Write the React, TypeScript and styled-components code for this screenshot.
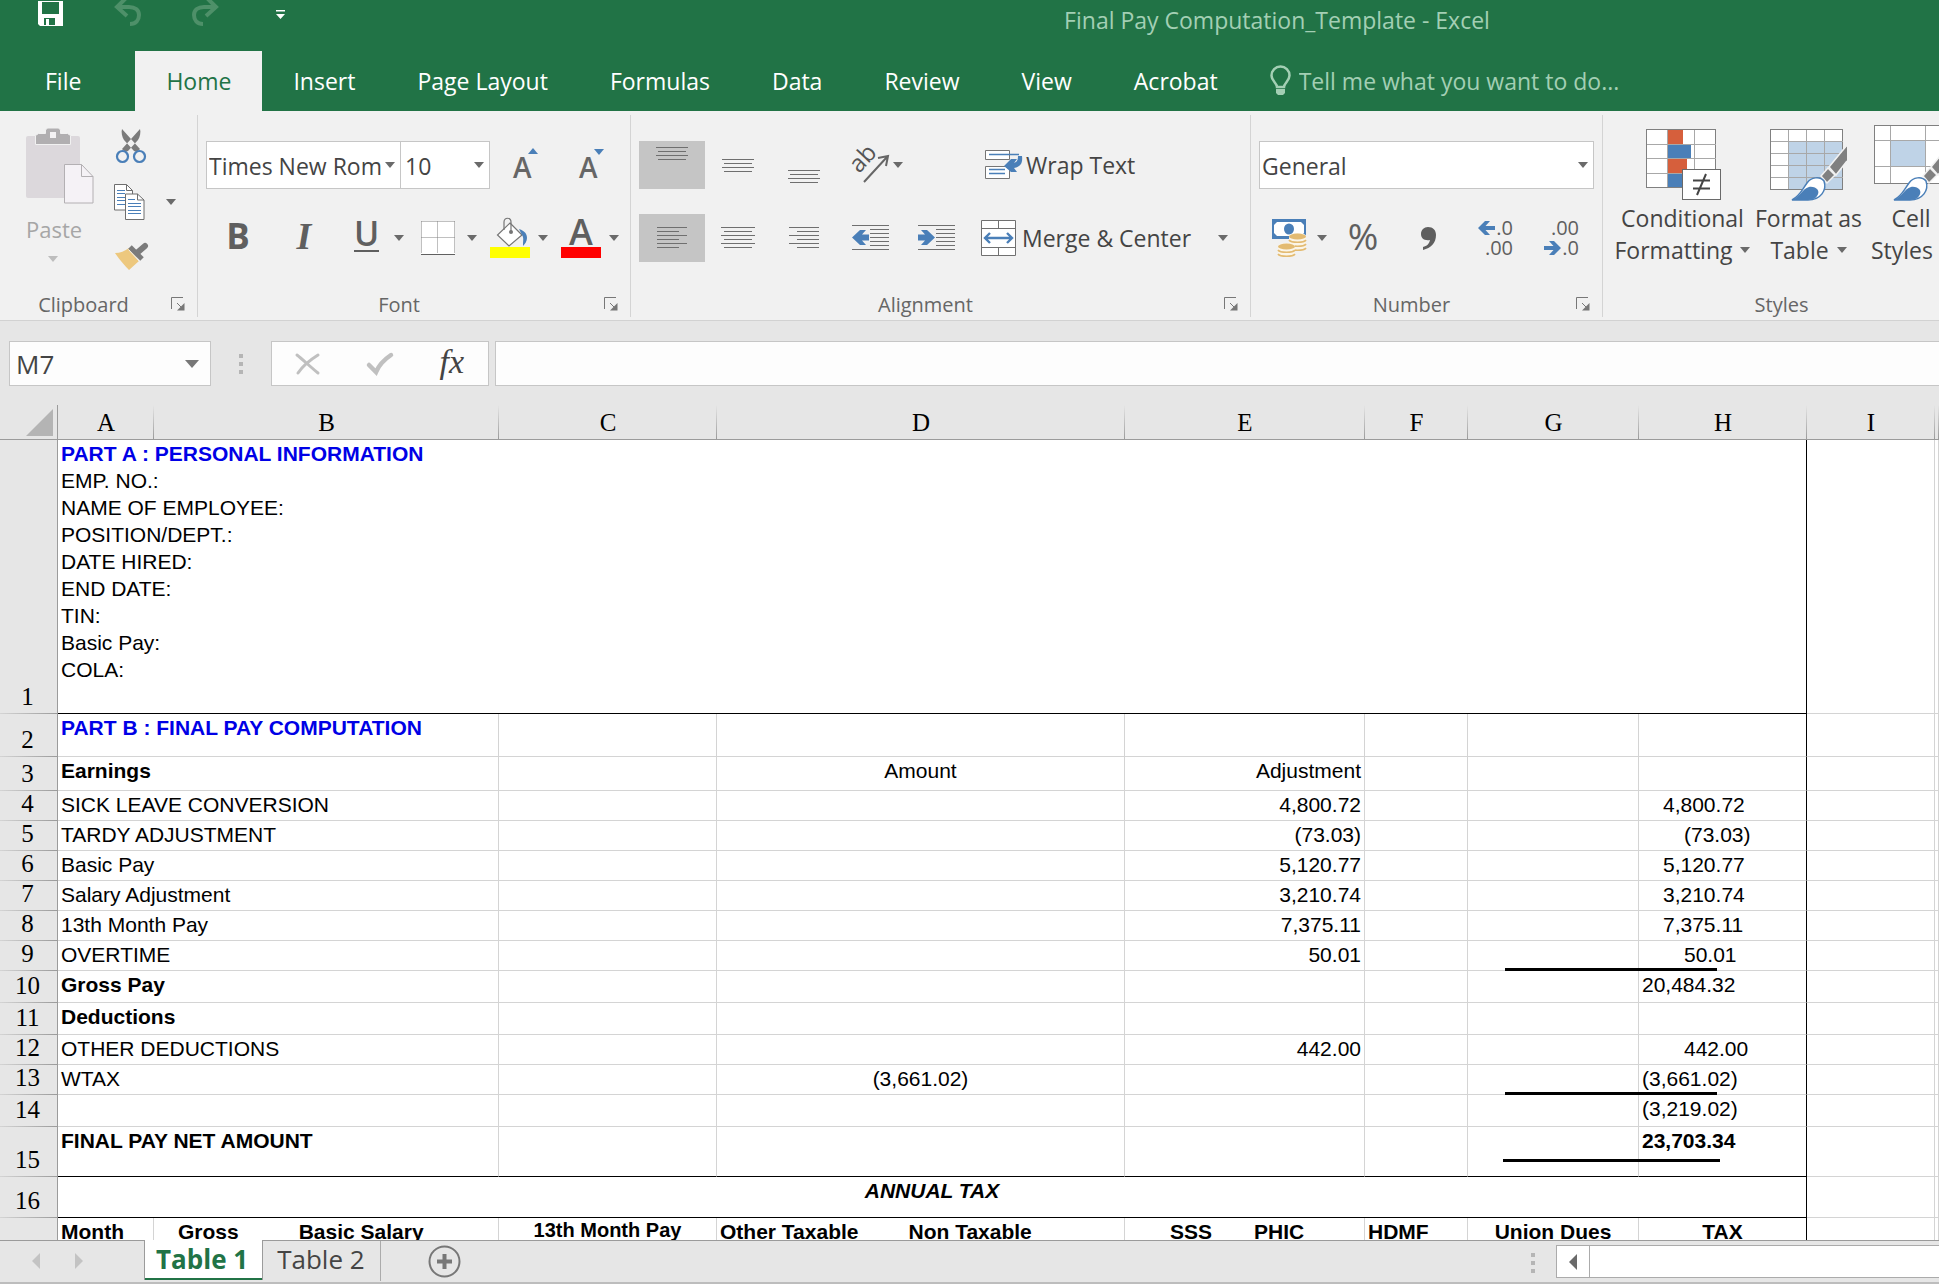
import React from 'react';
import styled, { createGlobalStyle, css } from 'styled-components';

const UI_FONT = '"Open Sans", "Noto Sans", sans-serif';
const CELL_FONT = '"Liberation Sans", Arial, sans-serif';
const HEAD_FONT = '"Liberation Serif", "Times New Roman", serif';

const GREEN = '#217346';
const BLUE = '#4a7fb8';
const GRAY = '#808080';
const GRID = '#d4d4d4';
const EDGE = '#9b9b9b';

const GlobalStyle = createGlobalStyle`
  *, *::before, *::after { box-sizing: border-box; }
  body { margin: 0; font-family: ${UI_FONT}; background: #e6e6e6; }
  button, input, select { font: inherit; color: inherit; margin: 0; }
  svg { display: block; flex: none; overflow: visible; }
`;

const Window = styled.div`
  display: flex;
  flex-direction: column;
  height: 100vh;
  overflow: hidden;
  background: #e6e6e6;
  color: #444;
  font-size: 23px;
`;

const BareButton = styled.button`
  display: inline-flex;
  align-items: center;
  justify-content: center;
  border: 0;
  padding: 0;
  background: none;
  cursor: pointer;
`;

/* ---------- title bar and tabs ---------- */

const TitleBar = styled.header`
  display: flex;
  height: 51px;
  background: ${GREEN};
  color: #a3cfb4;
`;

const QuickAccess = styled.div`
  display: flex;
  flex: 0 0 615px;
  align-items: flex-start;
  gap: 51px;
  padding-left: 38px;
`;

const Title = styled.h1`
  flex: 1;
  margin: 0;
  padding-top: 4px;
  font-size: 23px;
  font-weight: 400;
  line-height: 32px;
  text-align: center;
`;

const TabBar = styled.nav`
  display: flex;
  height: 60px;
  background: ${GREEN};
`;

const Tab = styled.button<{ $active?: boolean; $file?: boolean }>`
  border: 0;
  padding: 0 31px;
  background: ${(p) => (p.$active ? '#f1f1f1' : 'transparent')};
  color: ${(p) => (p.$active ? GREEN : '#fff')};
  line-height: 60px;
  white-space: nowrap;
  ${(p) => p.$file && css`padding: 0 54px 0 45px;`}
`;

const TellMe = styled.label`
  display: flex;
  flex: 1;
  align-items: center;
  gap: 8px;
  padding-left: 21px;
  color: #a3cfb4;
`;

const TellMeInput = styled.input`
  flex: 1;
  min-width: 0;
  border: 0;
  padding: 0;
  background: none;
  outline: none;
  &::placeholder { color: #a3cfb4; opacity: 1; }
`;

/* ---------- ribbon ---------- */

const Ribbon = styled.section`
  display: flex;
  flex: none;
  height: 210px;
  padding-top: 4px;
  overflow: hidden;
  background: #f1f1f1;
  border-bottom: 1px solid #d2d2d2;
`;

const Group = styled.div<{ $width: number }>`
  display: flex;
  flex: none;
  flex-direction: column;
  width: ${(p) => p.$width}px;
  height: 202px;
  border-right: 1px solid #d4d4d4;
`;

const GroupBody = styled.div`
  display: flex;
  flex: 1;
  flex-direction: column;
  gap: 25px;
  padding: 26px 8px 0;
`;

const GroupFoot = styled.div`
  display: flex;
  align-items: center;
  height: 26px;
  padding-right: 12px;
  color: #666;
  font-size: 20px;
`;

const GroupName = styled.span`
  flex: 1;
  text-align: center;
`;

const Launcher = styled(BareButton)`
  width: 18px;
  justify-content: flex-end;
`;

const ToolRow = styled.div`
  display: flex;
  align-items: center;
  height: 48px;
`;

const ToolButton = styled(BareButton)<{ $width?: number; $on?: boolean; $gap?: number; $start?: number }>`
  flex: none;
  width: ${(p) => p.$width ?? 66}px;
  height: 48px;
  gap: ${(p) => p.$gap ?? 10}px;
  background: ${(p) => (p.$on ? '#c5c5c5' : 'none')};
  color: #5f5f5f;
  ${(p) => p.$start && css`justify-content: flex-start; padding-left: ${p.$start}px;`}
`;

const LabelButton = styled(BareButton)`
  height: 48px;
  gap: 5px;
  white-space: nowrap;
`;

const SelectBox = styled.span<{ $width?: number; $joined?: boolean }>`
  display: flex;
  align-items: center;
  width: ${(p) => (p.$width ? `${p.$width}px` : '100%')};
  height: 48px;
  padding: 0 5px 0 2px;
  background: #fff;
  border: 1px solid #c6c6c6;
  ${(p) => p.$joined && css`margin-left: -1px; padding: 0 5px 0 4px;`}
`;

const Select = styled.select`
  flex: 1;
  min-width: 0;
  height: 46px;
  appearance: none;
  border: 0;
  padding: 2px 0 0;
  background: none;
  outline: none;
`;

const Glyph = styled.span<{ $size: number; $weight?: number; $serif?: boolean; $underline?: boolean }>`
  font-family: ${(p) => (p.$serif ? HEAD_FONT : UI_FONT)};
  font-size: ${(p) => p.$size}px;
  font-style: ${(p) => (p.$serif ? 'italic' : 'normal')};
  font-weight: ${(p) => p.$weight ?? 600};
  line-height: 36px;
  height: 40px;
  ${(p) =>
    p.$underline &&
    css`
      height: 34px;
      margin-bottom: 6px;
      border-bottom: 2px solid #5f5f5f;
      line-height: 30px;
    `}
`;

const ColorStack = styled.span`
  display: flex;
  flex-direction: column;
  align-items: center;
  width: 40px;
  height: 40px;
  border-bottom: 11px solid #f00;
  font-size: 36px;
  font-weight: 600;
  line-height: 28px;
`;

const ClipboardBody = styled.div`
  display: flex;
  flex: 1;
  padding: 4px 0 0 26px;
`;

const PasteButton = styled(BareButton)`
  flex-direction: column;
  align-items: flex-start;
  justify-content: flex-start;
  width: 78px;
  padding-top: 9px;
  color: #a6a6a6;
  font-size: 22px;
  line-height: 50px;
`;

const PasteCaret = styled.span`
  padding: 2px 0 0 22px;
`;

const ClipTools = styled.div`
  display: flex;
  flex-direction: column;
`;

const ClipTool = styled(BareButton)`
  justify-content: flex-start;
  gap: 21px;
  width: 82px;
  height: 55px;
  padding-left: 10px;
`;

const Decimals = styled.span`
  display: grid;
  justify-items: end;
  width: 36px;
  font-size: 20px;
  line-height: 20px;
`;

const DecimalLine = styled.span`
  display: flex;
  align-items: center;
  gap: 1px;
`;

const StylesBody = styled.div`
  display: flex;
  flex: 1;
  padding: 10px 0 0 4px;
`;

const BigButton = styled(BareButton)<{ $width: number }>`
  flex: none;
  flex-direction: column;
  justify-content: flex-start;
  width: ${(p) => p.$width}px;
  line-height: 32px;
  white-space: nowrap;
`;

const BigIcon = styled.span`
  display: flex;
  align-items: flex-end;
  height: 75px;
  margin-bottom: 2px;
`;

const BigLine = styled.span`
  display: flex;
  align-items: center;
  gap: 8px;
`;

/* ---------- formula bar ---------- */

const FormulaBar = styled.div`
  display: flex;
  flex: none;
  height: 84px;
  padding: 20px 0 19px 9px;
`;

const NameBox = styled.div`
  display: flex;
  align-items: center;
  width: 202px;
  padding: 0 11px 0 6px;
  background: #fdfdfd;
  border: 1px solid #c6c6c6;
`;

const PlainInput = styled.input`
  flex: 1;
  min-width: 0;
  width: 100%;
  height: 42px;
  border: 0;
  padding: 0;
  background: none;
  font-size: 26px;
  outline: none;
`;

const Dots = styled.span<{ $width: number }>`
  display: flex;
  flex-direction: column;
  align-items: center;
  justify-content: center;
  gap: 4px;
  width: ${(p) => p.$width}px;
`;

const Dot = styled.i`
  width: 4px;
  height: 4px;
  background: #b5b5b5;
`;

const EntryTools = styled.div`
  display: flex;
  align-items: center;
  justify-content: space-between;
  width: 218px;
  padding: 0 24px;
  background: #fdfdfd;
  border: 1px solid #c6c6c6;
`;

const FormulaField = styled.div`
  flex: 1;
  margin-left: 6px;
  padding: 0 8px;
  background: #fdfdfd;
  border: 1px solid #c6c6c6;
  border-right: 0;
`;

/* ---------- worksheet ---------- */

const SheetArea = styled.main`
  flex: 1;
  min-height: 0;
  overflow: hidden;
  background: #fff;
`;

const Grid = styled.table`
  width: 100%;
  table-layout: fixed;
  border-collapse: separate;
  border-spacing: 0;
  font-family: ${CELL_FONT};
  font-size: 21px;
  line-height: 27px;
  color: #000;
`;

const headText = css`
  padding: 0 0 3px;
  font-family: ${HEAD_FONT};
  font-size: 25px;
  font-weight: 400;
  line-height: 26px;
  text-align: center;
  vertical-align: bottom;
`;

const ColHead = styled.th`
  ${headText}
  height: 35px;
  border-bottom: 1px solid ${EDGE};
  background: linear-gradient(#e6e6e6, ${EDGE}) right / 1px 100% no-repeat #e6e6e6;
`;

const RowHead = styled.th`
  ${headText}
  padding: 0 2px 4px 0;
  border-right: 1px solid ${EDGE};
  background: linear-gradient(90deg, #d4d4d4, ${EDGE}) bottom / 100% 1px no-repeat #e6e6e6;
`;

const Corner = styled.td`
  padding: 0 4px 3px 0;
  border-bottom: 1px solid ${EDGE};
  border-right: 1px solid ${EDGE};
  background: #e6e6e6;
  vertical-align: bottom;
  & > svg { margin-left: auto; }
`;

const Row = styled.tr<{ $height: number }>`
  height: ${(p) => p.$height}px;
`;

type CellProps = {
  $align?: string;
  $bold?: boolean;
  $italic?: boolean;
  $small?: boolean;
  $heading?: boolean;
  $rule?: boolean;
  $edge?: boolean;
  $indent?: number;
};

const Cell = styled.td<CellProps>`
  position: relative;
  padding: 0 3px 0 ${(p) => 3 + (p.$indent ?? 0) * 21}px;
  border-right: 1px solid ${(p) => (p.$edge ? '#000' : GRID)};
  border-bottom: 1px solid ${(p) => (p.$rule ? '#000' : GRID)};
  color: ${(p) => (p.$heading ? '#0000e6' : '#000')};
  font-weight: ${(p) => (p.$bold || p.$heading ? 700 : 400)};
  font-style: ${(p) => (p.$italic ? 'italic' : 'normal')};
  text-align: ${(p) => p.$align ?? 'left'};
  vertical-align: top;
  white-space: nowrap;
  ${(p) => p.$small && css`font-size: 20px; line-height: 25px;`}
`;

const InfoLine = styled.div<{ $heading?: boolean }>`
  color: ${(p) => (p.$heading ? '#0000e6' : '#000')};
  font-weight: ${(p) => (p.$heading ? 700 : 400)};
`;

const TotalLine = styled.span<{ $raised?: boolean }>`
  position: absolute;
  z-index: 1;
  left: ${(p) => (p.$raised ? 35 : 37)}px;
  bottom: ${(p) => (p.$raised ? 14 : -1)}px;
  width: ${(p) => (p.$raised ? 217 : 212)}px;
  height: 3px;
  background: #000;
`;

const Pair = styled.span<{ $gap: number }>`
  display: flex;
  gap: ${(p) => p.$gap}px;
`;

/* ---------- sheet tabs ---------- */

const SheetBar = styled.footer`
  display: flex;
  flex: none;
  height: 44px;
  border-top: 1px solid ${EDGE};
  background: linear-gradient(#bdbdbd, #bdbdbd) bottom / 100% 2px no-repeat #e6e6e6;
`;

const SheetArrows = styled.div`
  display: flex;
  align-items: center;
  gap: 35px;
  width: 144px;
  height: 40px;
  padding-left: 32px;
`;

const SheetTab = styled.button<{ $active?: boolean }>`
  height: 40px;
  border: 0;
  padding: 0 15px 4px 14px;
  background: none;
  font-size: 26px;
  line-height: 34px;
  white-space: nowrap;
  ${(p) =>
    p.$active
      ? css`
          margin-top: -1px;
          padding: 0 14px 3px 11px;
          background: #fff;
          color: ${GREEN};
          font-weight: 700;
          border: solid ${EDGE};
          border-width: 0 1px;
          box-shadow: inset 0 -2px 0 ${GREEN};
        `
      : css`border-right: 1px solid #ababab;`}
`;

const AddSheet = styled(BareButton)`
  width: 128px;
  height: 40px;
`;

const Spacer = styled.span`
  flex: 1;
`;

const ScrollTrack = styled.div`
  display: flex;
  width: 383px;
  height: 33px;
  margin: 4px 0 0 11px;
  background: #fff;
  border: 1px solid #ababab;
  border-right: 0;
`;

const ScrollButton = styled(BareButton)`
  width: 33px;
  border-right: 1px solid #ababab;
`;

/* ---------- drawings ---------- */

const Caret = ({ color = '#6a6a6a', w = 10, h = 6 }: { color?: string; w?: number; h?: number }) => (
  <svg width={w} height={h} aria-hidden="true">
    <path d={`M0 0H${w}L${w / 2} ${h}Z`} fill={color} />
  </svg>
);

const SaveIcon = () => (
  <svg width="25" height="26" viewBox="0 0 25 26">
    <path fillRule="evenodd" fill="#fff" d="M0 1h25v25H2l-2-2zM4 2v12h17V2zM6 18v7h2v-6h3v6h6v-7z" />
  </svg>
);

const UndoIcon = ({ flip }: { flip?: boolean }) => (
  <svg width="27" height="26" viewBox="0 0 27 26">
    <g transform={flip ? 'matrix(-1 0 0 1 27 0)' : undefined} fill="none" stroke="#4e9069" strokeWidth="4">
      <path d="M13-3 3 7l10 9" />
      <path d="M3 7h12c6 0 10 3 10 8s-3 9-9 9" />
    </g>
  </svg>
);

const QuickMenuIcon = () => (
  <svg width="15" height="20" viewBox="-6 0 15 20">
    <path d="M0 10h9v1.500H0zM0 14h9l-4.500 5z" fill="#fff" />
  </svg>
);

const BulbIcon = () => (
  <svg width="21" height="30" viewBox="0 0 21 30">
    <path d="M7 21c0-4-5.500-6-5.500-11.500a9 9 0 0 1 18 0C19.500 15 14 17 14 21z" fill="none" stroke="#a3cfb4" strokeWidth="2.500" />
    <path d="M6 23h9v4l-2 2H8l-2-2z" fill="#a3cfb4" />
  </svg>
);

const PasteIcon = () => (
  <svg width="68" height="76" viewBox="0 0 68 76">
    <rect y="8" width="54" height="62" rx="2" fill="#dcd8dc" />
    <path d="M9.500 16.500v-9l3-2h7V2l2-2h11l2 2v3.500h7l3 2v9z" fill="#b1afb1" stroke="#f1f1f1" />
    <rect x="24" y="4" width="6" height="6" fill="#f4f2f4" />
    <path d="M38.500 36.500h17l11.500 12v26.500h-28.500z" fill="#f5f2f6" stroke="#b3b0b3" />
    <path d="M55.500 36.500v12H67" fill="none" stroke="#b3b0b3" />
  </svg>
);

const CutIcon = () => (
  <svg width="33" height="35" viewBox="-2 0 33 35">
    <path d="M6 0 24 20l-3 3-3-1L8 11C6 8 5 3 6 0zM24 0 6 20l3 3 3-1 10-11c2-3 3-8 2-11z" fill="#7b7b7b" />
    <g fill="#f1f1f1" stroke={BLUE} strokeWidth="2.200">
      <ellipse cx="6.500" cy="27.500" rx="5.500" ry="5.500" />
      <ellipse cx="23.500" cy="27.500" rx="5.500" ry="5.500" />
    </g>
  </svg>
);

const CopyIcon = () => (
  <svg width="31" height="36" viewBox="0 0 31 36">
    <path d="M.5.500h12l6 6V26H.500z" fill="#fff" stroke="#6e6e6e" />
    <path d="M12.500.500v6h6" fill="none" stroke="#6e6e6e" />
    <path d="M3 6.500h8M3 9.500h8M3 13.500h8M3 16.500h8M3 20.500h8" stroke={BLUE} />
    <path d="M11.500 10h12l6.500 6v19.500H11.500z" fill="#fff" stroke="#6e6e6e" />
    <path d="M23.500 10v6H30" fill="none" stroke="#6e6e6e" />
    <path d="M14 15.500h7M14 19.500h13M14 22.500h13M14 26.500h13M14 29.500h13" stroke={BLUE} />
  </svg>
);

const BrushIcon = () => (
  <svg width="34" height="28" viewBox="-1 0 34 28">
    <path d="M0 10c5 0 10-2 14-5l10 13-10 9C9 22 4 16 0 10z" fill="#edc87e" />
    <path d="m15 4 12 12" stroke="#7b7b7b" strokeWidth="5" />
    <path d="m23 9 7-6" stroke="#7b7b7b" strokeWidth="6" strokeLinecap="round" />
    <path d="m13.500 6.500 11 12" stroke="#f1f1f1" />
  </svg>
);

const BorderIcon = () => (
  <svg width="34" height="34" viewBox="0 0 34 34">
    <rect width="34" height="33" fill="#fff" />
    <path d="M.5.500h33M.5 16.500h33M.5.500v32M16.500.500v32M33.500.500v32" stroke="#808080" strokeDasharray="1 1" fill="none" />
    <path d="M0 33.500h34" stroke="#606060" />
  </svg>
);

const FillIcon = () => (
  <svg width="40" height="40" viewBox="0 0 40 40">
    <path d="M20 5 32 17 19 28 7.500 17z" fill="#fff" stroke="#757575" strokeWidth="1.200" />
    <path d="M14 12V4c0-5 7-5 7 0v9" fill="none" stroke="#757575" strokeWidth="1.200" />
    <circle cx="21" cy="14" r="2" fill="#757575" />
    <path d="M29 11c6 2 8 5 8 9 0 3-2 6-4 8 0-6 1-8-1-11z" fill={BLUE} />
    <rect y="29" width="40" height="11" fill="#ff0" />
  </svg>
);

const GrowIcon = ({ down }: { down?: boolean }) => (
  <svg width="26" height="34" viewBox="0 0 26 34">
    <text x="0" y="30" fontSize="28" fontWeight="600" fontFamily='"Open Sans", sans-serif' fill="#666">A</text>
    <path d={down ? 'M15 1h10l-5 6z' : 'M15 6h10l-5-6z'} fill={BLUE} />
  </svg>
);

const lineSpec: Record<string, { top: number; long: number; short: number; count: number; side: string }> = {
  top: { top: 6, long: 32, short: 28, count: 4, side: 'center' },
  middle: { top: 18, long: 32, short: 28, count: 4, side: 'center' },
  bottom: { top: 29, long: 32, short: 28, count: 4, side: 'center' },
  left: { top: 13, long: 30, short: 22, count: 6, side: 'left' },
  center: { top: 13, long: 34, short: 28, count: 6, side: 'center' },
  right: { top: 13, long: 30, short: 22, count: 6, side: 'right' },
};

const AlignIcon = ({ kind }: { kind: string }) => {
  const s = lineSpec[kind];
  return (
    <svg width="34" height="48" viewBox="0 0 34 48">
      {Array.from({ length: s.count }, (_, i) => {
        const w = i % 2 ? s.short : s.long;
        const x = s.side === 'left' ? 2 : s.side === 'right' ? 32 - w : (34 - w) / 2;
        return <rect key={i} x={x} y={s.top + i * 4} width={w} height="1" fill="#6f6f6f" />;
      })}
    </svg>
  );
};

const OrientIcon = () => (
  <svg width="38" height="36" viewBox="0 0 38 36">
    <text transform="translate(8 27) rotate(-47)" fontSize="24" fontFamily='"Open Sans", sans-serif' fill="#555">ab</text>
    <path d="M13 35 36 10M27 11l10-2-2 10" fill="none" stroke="#666" strokeWidth="2" />
  </svg>
);

const WrapIcon = () => (
  <svg width="36" height="30" viewBox="0 0 36 30">
    <path d="M.5.500h24v9H.500zM.5 16.500h24v12H.500z" fill="#fff" stroke="#757575" />
    <path d="M4 4.500h30M4 19.500h16M4 23.500h16" stroke={BLUE} strokeWidth="1.500" />
    <path d="M33 6h4c1 8-2 11-8 12l3 4h-6l-7-6 7-7h6l-3 4c3-1 4-3 4-7z" fill={BLUE} />
  </svg>
);

const MergeIcon = () => (
  <svg width="36" height="37" viewBox="0 0 36 37">
    <path d="M.5.500h34v35H.500z" fill="#fff" stroke="#707070" />
    <path d="M.5 8.500h34M.5 27.500h34M17.500.500v8M17.500 27.500v8" stroke="#707070" />
    <path d="M4 18h27M9 13l-5 5 5 5M26 13l5 5-5 5" fill="none" stroke={BLUE} strokeWidth="2.400" />
  </svg>
);

const IndentIcon = ({ right }: { right?: boolean }) => (
  <svg width="37" height="26" viewBox="0 0 37 26">
    <path d="M0 .5h37M18 4.500h19M18 8.500h19M18 12.500h19M18 16.500h19M18 20.500h19M0 24.500h37" stroke="#6f6f6f" />
    {right ? (
      <path d="M0 9.500h7L3 5h6l8 7.500L9 20H3l4-4.500H0z" fill={BLUE} />
    ) : (
      <path d="M17 9.500h-7L14 5H8l-8 7.500L8 20h6l-4-4.500h7z" fill={BLUE} />
    )}
  </svg>
);

const MoneyIcon = () => (
  <svg width="35" height="38" viewBox="0 0 35 38">
    <path d="M0 0h34v20H0z" fill={BLUE} />
    <path d="M5 3h24l3 3v8l-3 3H5l-3-3V6z" fill="#fff" />
    <ellipse cx="17" cy="10" rx="5" ry="5.500" fill={BLUE} />
    <path d="M17 17c0-4 17-4 17 0v12c0 3-17 3-17 0z" fill="#fbf5e8" />
    <ellipse cx="25.500" cy="17.500" rx="8.500" ry="3" fill="#e3bb72" />
    <path d="M17 21c2 3 15 3 17 0M17 25c2 3 15 3 17 0M17 29c2 3 15 3 17 0" fill="none" stroke="#e3bb72" strokeWidth="1.600" />
    <path d="M6 27c0-4 17-4 17 0v9c0 3-17 3-17 0z" fill="#fbf5e8" />
    <ellipse cx="14.500" cy="27.500" rx="8.500" ry="3" fill="#e3bb72" />
    <path d="M6 31c2 3 15 3 17 0M6 35c2 3 15 3 17 0" fill="none" stroke="#e3bb72" strokeWidth="1.600" />
  </svg>
);

const CommaIcon = () => (
  <svg width="15" height="23" viewBox="0 0 15 23">
    <path d="M7 0c5 0 8 3 8 8 0 8-5 13-13 15v-3c4-1 6-3 7-7C3 14 0 11 0 7c0-4 3-7 7-7z" fill="#5f5f5f" />
  </svg>
);

const SmallArrow = ({ right }: { right?: boolean }) => (
  <svg width="17" height="14" viewBox="0 0 17 14">
    <path
      d={right ? 'M17 7 10 0H5l4.500 5H0v4h9.500L5 14h5z' : 'M0 7l7-7h5L7.500 5H17v4H7.500l4.500 5H7z'}
      fill={BLUE}
    />
  </svg>
);

const LauncherIcon = () => (
  <svg width="14" height="14" viewBox="0 0 14 14">
    <path d="M.5 12V.500H12M6 6l5 5" fill="none" stroke="#777" />
    <path d="M13.500 6v7.500H6z" fill="#777" />
  </svg>
);

const PaintTip = () => (
  <>
    <path d="M77 17 59 38l7 8 11-14z" fill={GRAY} />
    <path d="M77 16 59 38l7 8 11-14" fill="none" stroke="#f1f1f1" strokeWidth="1.500" />
    <path d="m58 39-7 8 6 7 8-8z" fill={GRAY} stroke="#f1f1f1" strokeWidth="1.500" />
    <path
      d="M22 71c8-4 10-10 15-17 4-6 13-7 17-2 3 9-3 19-16 19z"
      fill="#fff"
      stroke={BLUE}
      strokeWidth="1.500"
    />
    <path d="M22 71c9-4 10-11 17-13 7-1 12 4 8 9-2 3-5 4-11 4z" fill={BLUE} />
  </>
);

const ConditionalIcon = () => (
  <svg width="74" height="71" viewBox="0 0 74 71">
    <rect x=".5" y=".5" width="69" height="58" fill="#fff" stroke={GRAY} />
    <path d="M21.500 1v57M48.500 1v57M1 15.500h69M1 29.500h69M1 44.500h69" stroke="#a8a8a8" />
    <path d="M22 1h15v14H22zM22 30h19v14H22z" fill="#d65f3c" />
    <path d="M22 16h23v13H22zM22 45h14v13H22z" fill={BLUE} />
    <rect x="36.500" y="40.500" width="38" height="30" fill="#fff" stroke="#6a6a6a" />
    <path d="M47 51.500h17M47 59.500h17M60 45 51 66" stroke="#444" strokeWidth="2" />
  </svg>
);

const TableFormatIcon = () => (
  <svg width="77" height="71" viewBox="0 0 77 71">
    <rect x=".5" y=".5" width="72" height="60" fill="#fff" stroke={GRAY} />
    <path d="M19 13h53v47H19z" fill="#bfd3e7" />
    <path d="M18.500 1v59M36.500 1v59M54.500 1v59M1 12.500h72M1 24.500h72M1 36.500h72M1 48.500h72" stroke="#a8a8a8" />
    <PaintTip />
  </svg>
);

const CellStylesIcon = () => (
  <svg width="74" height="75" viewBox="0 0 74 75">
    <rect x=".5" y=".5" width="70" height="58" fill="#fff" stroke={GRAY} />
    <path d="M17 15h35v26H17z" fill="#bfd3e7" />
    <path d="M16.500 1v57M51.500 1v57M1 15.500h70M1 41.500h70" stroke="#a8a8a8" />
    <g transform="translate(-2 4)">
      <PaintTip />
    </g>
  </svg>
);

const CancelIcon = () => (
  <svg width="24" height="22" viewBox="0 0 24 22">
    <path d="M1 2c4 3 17 15 21 18M22 2C14 7 6 14 2 20" fill="none" stroke="#c0c0c0" strokeWidth="3" strokeLinecap="round" />
  </svg>
);

const EnterIcon = () => (
  <svg width="26" height="22" viewBox="0 0 26 22">
    <path d="M2 12l7 7C12 12 18 6 24 2" fill="none" stroke="#c0c0c0" strokeWidth="4.500" strokeLinecap="round" />
  </svg>
);

const PlusIcon = () => (
  <svg width="33" height="33" viewBox="0 0 33 33">
    <circle cx="16.500" cy="16.500" r="15" fill="none" stroke="#777" strokeWidth="2" />
    <path d="M16.500 9v15M9 16.500h15" stroke="#777" strokeWidth="4" />
  </svg>
);

const SideArrow = ({ right, color = '#c3c3c3' }: { right?: boolean; color?: string }) => (
  <svg width="8" height="16" viewBox="0 0 8 16">
    <path d={right ? 'M0 0v16l8-8z' : 'M8 0v16L0 8z'} fill={color} />
  </svg>
);

const CornerIcon = () => (
  <svg width="27" height="27" viewBox="0 0 27 27">
    <path d="M27 0v27H0z" fill="#b4b4b4" />
  </svg>
);

/* ---------- parts ---------- */

const Foot = ({ name, launcher = true }: { name: string; launcher?: boolean }) => (
  <GroupFoot>
    <GroupName>{name}</GroupName>
    {launcher && (
      <Launcher aria-label={`${name} settings`}>
        <LauncherIcon />
      </Launcher>
    )}
  </GroupFoot>
);

const ThreeDots = ({ width }: { width: number }) => (
  <Dots $width={width}>
    <Dot />
    <Dot />
    <Dot />
  </Dots>
);

const tabs = ['Insert', 'Page Layout', 'Formulas', 'Data', 'Review', 'View', 'Acrobat'];
const columns = [96, 345, 218, 408, 240, 103, 171, 168, 128];
const letters = 'ABCDEFGHI'.split('');
const info = ['EMP. NO.:', 'NAME OF EMPLOYEE:', 'POSITION/DEPT.:', 'DATE HIRED:', 'END DATE:', 'TIN:', 'Basic Pay:', 'COLA:'];

type Line = {
  n: number;
  height: number;
  label?: string;
  bold?: boolean;
  heading?: boolean;
  d?: string;
  e?: string;
  h?: string;
  indent?: number;
  hBold?: boolean;
  total?: 'low' | 'raised';
  rule?: boolean;
};

const lines: Line[] = [
  { n: 2, height: 43, label: 'PART B : FINAL PAY COMPUTATION', heading: true },
  { n: 3, height: 34, label: 'Earnings', bold: true, d: 'Amount', e: 'Adjustment' },
  { n: 4, height: 30, label: 'SICK LEAVE CONVERSION', e: '4,800.72', h: '4,800.72', indent: 1 },
  { n: 5, height: 30, label: 'TARDY ADJUSTMENT', e: '(73.03)', h: '(73.03)', indent: 2 },
  { n: 6, height: 30, label: 'Basic Pay', e: '5,120.77', h: '5,120.77', indent: 1 },
  { n: 7, height: 30, label: 'Salary Adjustment', e: '3,210.74', h: '3,210.74', indent: 1 },
  { n: 8, height: 30, label: '13th Month Pay', e: '7,375.11', h: '7,375.11', indent: 1 },
  { n: 9, height: 30, label: 'OVERTIME', e: '50.01', h: '50.01', indent: 2, total: 'low' },
  { n: 10, height: 32, label: 'Gross Pay', bold: true, h: '20,484.32' },
  { n: 11, height: 32, label: 'Deductions', bold: true },
  { n: 12, height: 30, label: 'OTHER DEDUCTIONS', e: '442.00', h: '442.00', indent: 2 },
  { n: 13, height: 30, label: 'WTAX', d: '(3,661.02)', h: '(3,661.02)', total: 'low' },
  { n: 14, height: 32, h: '(3,219.02)' },
  { n: 15, height: 50, label: 'FINAL PAY NET AMOUNT', bold: true, h: '23,703.34', hBold: true, total: 'raised', rule: true },
];

const Worksheet = () => (
  <Grid>
    <colgroup>
      <col width={58} />
      {columns.map((w, i) => (
        <col key={i} width={w} />
      ))}
      <col />
    </colgroup>
    <thead>
      <tr>
        <Corner>
          <CornerIcon />
        </Corner>
        {letters.map((l) => (
          <ColHead key={l} scope="col">{l}</ColHead>
        ))}
        <ColHead />
      </tr>
    </thead>
    <tbody>
      <Row $height={274}>
        <RowHead scope="row">1</RowHead>
        <Cell colSpan={8} $rule $edge>
          <InfoLine $heading>PART A : PERSONAL INFORMATION</InfoLine>
          {info.map((t) => (
            <InfoLine key={t}>{t}</InfoLine>
          ))}
        </Cell>
        <Cell />
        <Cell />
      </Row>
      {lines.map((r) => (
        <Row key={r.n} $height={r.height}>
          <RowHead scope="row">{r.n}</RowHead>
          <Cell colSpan={2} $bold={r.bold} $heading={r.heading} $rule={r.rule}>{r.label}</Cell>
          <Cell $rule={r.rule} />
          <Cell $rule={r.rule} $align="center">{r.d}</Cell>
          <Cell $rule={r.rule} $align="right">{r.e}</Cell>
          <Cell $rule={r.rule} />
          <Cell $rule={r.rule}>{r.total && <TotalLine $raised={r.total === 'raised'} />}</Cell>
          <Cell $rule={r.rule} $edge $bold={r.hBold} $indent={r.indent}>{r.h}</Cell>
          <Cell />
          <Cell />
        </Row>
      ))}
      <Row $height={41}>
        <RowHead scope="row">16</RowHead>
        <Cell colSpan={8} $rule $edge $bold $italic $align="center">ANNUAL TAX</Cell>
        <Cell />
        <Cell />
      </Row>
      <Row $height={50}>
        <RowHead scope="row" />
        <Cell $bold>Month</Cell>
        <Cell $bold $indent={1}>
          <Pair $gap={60}>
            <span>Gross</span>
            <span>Basic Salary</span>
          </Pair>
        </Cell>
        <Cell $bold $small $align="center">13th Month Pay</Cell>
        <Cell $bold>
          <Pair $gap={50}>
            <span>Other Taxable</span>
            <span>Non Taxable</span>
          </Pair>
        </Cell>
        <Cell $bold $indent={2}>
          <Pair $gap={42}>
            <span>SSS</span>
            <span>PHIC</span>
          </Pair>
        </Cell>
        <Cell $bold>HDMF</Cell>
        <Cell $bold $align="center">Union Dues</Cell>
        <Cell $bold $align="center" $edge>TAX</Cell>
        <Cell />
        <Cell />
      </Row>
    </tbody>
  </Grid>
);

export default function App() {
  return (
    <Window>
      <GlobalStyle />
      <TitleBar>
        <QuickAccess>
          <BareButton aria-label="Save"><SaveIcon /></BareButton>
          <BareButton aria-label="Undo"><UndoIcon /></BareButton>
          <BareButton aria-label="Redo"><UndoIcon flip /></BareButton>
          <BareButton aria-label="Customize toolbar"><QuickMenuIcon /></BareButton>
        </QuickAccess>
        <Title>Final Pay Computation_Template - Excel</Title>
      </TitleBar>
      <TabBar>
        <Tab $file>File</Tab>
        <Tab $active>Home</Tab>
        {tabs.map((t) => (
          <Tab key={t}>{t}</Tab>
        ))}
        <TellMe>
          <BulbIcon />
          <TellMeInput aria-label="Tell me what you want to do" placeholder="Tell me what you want to do..." />
        </TellMe>
      </TabBar>

      <Ribbon>
        <Group $width={198}>
          <ClipboardBody>
            <PasteButton>
              <PasteIcon />
              Paste
              <PasteCaret><Caret color="#bdbdbd" /></PasteCaret>
            </PasteButton>
            <ClipTools>
              <ClipTool aria-label="Cut"><CutIcon /></ClipTool>
              <ClipTool aria-label="Copy"><CopyIcon /><Caret /></ClipTool>
              <ClipTool aria-label="Format painter"><BrushIcon /></ClipTool>
            </ClipTools>
          </ClipboardBody>
          <Foot name="Clipboard" />
        </Group>

        <Group $width={433}>
          <GroupBody>
            <ToolRow>
              <SelectBox $width={195}>
                <Select aria-label="Font name"><option>Times New Rom</option></Select>
                <Caret />
              </SelectBox>
              <SelectBox $width={90} $joined>
                <Select aria-label="Font size"><option>10</option></Select>
                <Caret />
              </SelectBox>
              <ToolButton $width={72} aria-label="Increase font size"><GrowIcon /></ToolButton>
              <ToolButton $width={60} aria-label="Decrease font size"><GrowIcon down /></ToolButton>
            </ToolRow>
            <ToolRow>
              <ToolButton $width={64} aria-label="Bold"><Glyph $size={35} $weight={700}>B</Glyph></ToolButton>
              <ToolButton $width={68} aria-label="Italic"><Glyph $size={38} $weight={700} $serif>I</Glyph></ToolButton>
              <ToolButton $width={76} $start={16} $gap={15} aria-label="Underline">
                <Glyph $size={34} $underline>U</Glyph><Caret />
              </ToolButton>
              <ToolButton $width={70} $start={7} $gap={12} aria-label="Borders"><BorderIcon /><Caret /></ToolButton>
              <ToolButton $width={71} $start={6} $gap={8} aria-label="Fill color"><FillIcon /><Caret /></ToolButton>
              <ToolButton $width={70} $start={6} $gap={8} aria-label="Font color"><ColorStack>A</ColorStack><Caret /></ToolButton>
            </ToolRow>
          </GroupBody>
          <Foot name="Font" />
        </Group>

        <Group $width={620}>
          <GroupBody>
            <ToolRow>
              <ToolButton $on aria-label="Top align"><AlignIcon kind="top" /></ToolButton>
              <ToolButton aria-label="Middle align"><AlignIcon kind="middle" /></ToolButton>
              <ToolButton aria-label="Bottom align"><AlignIcon kind="bottom" /></ToolButton>
              <ToolButton $width={148} $start={14} $gap={4} aria-label="Orientation"><OrientIcon /><Caret /></ToolButton>
              <LabelButton><WrapIcon />Wrap Text</LabelButton>
            </ToolRow>
            <ToolRow>
              <ToolButton $on aria-label="Align left"><AlignIcon kind="left" /></ToolButton>
              <ToolButton aria-label="Center"><AlignIcon kind="center" /></ToolButton>
              <ToolButton aria-label="Align right"><AlignIcon kind="right" /></ToolButton>
              <ToolButton aria-label="Decrease indent"><IndentIcon /></ToolButton>
              <ToolButton $width={78} $start={15} aria-label="Increase indent"><IndentIcon right /></ToolButton>
              <LabelButton><MergeIcon />Merge &amp; Center</LabelButton>
              <ToolButton $width={64} aria-label="Merge options"><Caret /></ToolButton>
            </ToolRow>
          </GroupBody>
          <Foot name="Alignment" />
        </Group>

        <Group $width={352}>
          <GroupBody>
            <ToolRow>
              <SelectBox>
                <Select aria-label="Number format"><option>General</option></Select>
                <Caret />
              </SelectBox>
            </ToolRow>
            <ToolRow>
              <ToolButton $width={80} aria-label="Accounting format"><MoneyIcon /><Caret /></ToolButton>
              <ToolButton $width={48} aria-label="Percent style"><Glyph $size={37} $weight={400}>%</Glyph></ToolButton>
              <ToolButton $width={82} aria-label="Comma style"><CommaIcon /></ToolButton>
              <ToolButton $width={52} aria-label="Increase decimal">
                <Decimals>
                  <DecimalLine><SmallArrow />.0</DecimalLine>
                  <span>.00</span>
                </Decimals>
              </ToolButton>
              <ToolButton $width={80} aria-label="Decrease decimal">
                <Decimals>
                  <span>.00</span>
                  <DecimalLine><SmallArrow right />.0</DecimalLine>
                </Decimals>
              </ToolButton>
            </ToolRow>
          </GroupBody>
          <Foot name="Number" />
        </Group>

        <Group $width={370}>
          <StylesBody>
            <BigButton $width={151}>
              <BigIcon><ConditionalIcon /></BigIcon>
              <span>Conditional</span>
              <BigLine>Formatting<Caret /></BigLine>
            </BigButton>
            <BigButton $width={101}>
              <BigIcon><TableFormatIcon /></BigIcon>
              <span>Format as</span>
              <BigLine>Table<Caret /></BigLine>
            </BigButton>
            <BigButton $width={104}>
              <BigIcon><CellStylesIcon /></BigIcon>
              <span>Cell</span>
              <BigLine>Styles<Caret /></BigLine>
            </BigButton>
          </StylesBody>
          <Foot name="Styles" launcher={false} />
        </Group>
      </Ribbon>

      <FormulaBar>
        <NameBox>
          <PlainInput aria-label="Name box" defaultValue="M7" />
          <Caret w={14} h={8} color="#777" />
        </NameBox>
        <ThreeDots width={60} />
        <EntryTools>
          <BareButton aria-label="Cancel"><CancelIcon /></BareButton>
          <BareButton aria-label="Enter"><EnterIcon /></BareButton>
          <BareButton aria-label="Insert function"><Glyph $size={34} $weight={400} $serif>fx</Glyph></BareButton>
        </EntryTools>
        <FormulaField>
          <PlainInput aria-label="Formula" />
        </FormulaField>
      </FormulaBar>

      <SheetArea>
        <Worksheet />
      </SheetArea>

      <SheetBar>
        <SheetArrows>
          <BareButton aria-label="Previous sheet"><SideArrow /></BareButton>
          <BareButton aria-label="Next sheet"><SideArrow right /></BareButton>
        </SheetArrows>
        <SheetTab $active>Table 1</SheetTab>
        <SheetTab>Table 2</SheetTab>
        <AddSheet aria-label="New sheet"><PlusIcon /></AddSheet>
        <Spacer />
        <ThreeDots width={24} />
        <ScrollTrack>
          <ScrollButton aria-label="Scroll left"><SideArrow color="#6a6a6a" /></ScrollButton>
        </ScrollTrack>
      </SheetBar>
    </Window>
  );
}
